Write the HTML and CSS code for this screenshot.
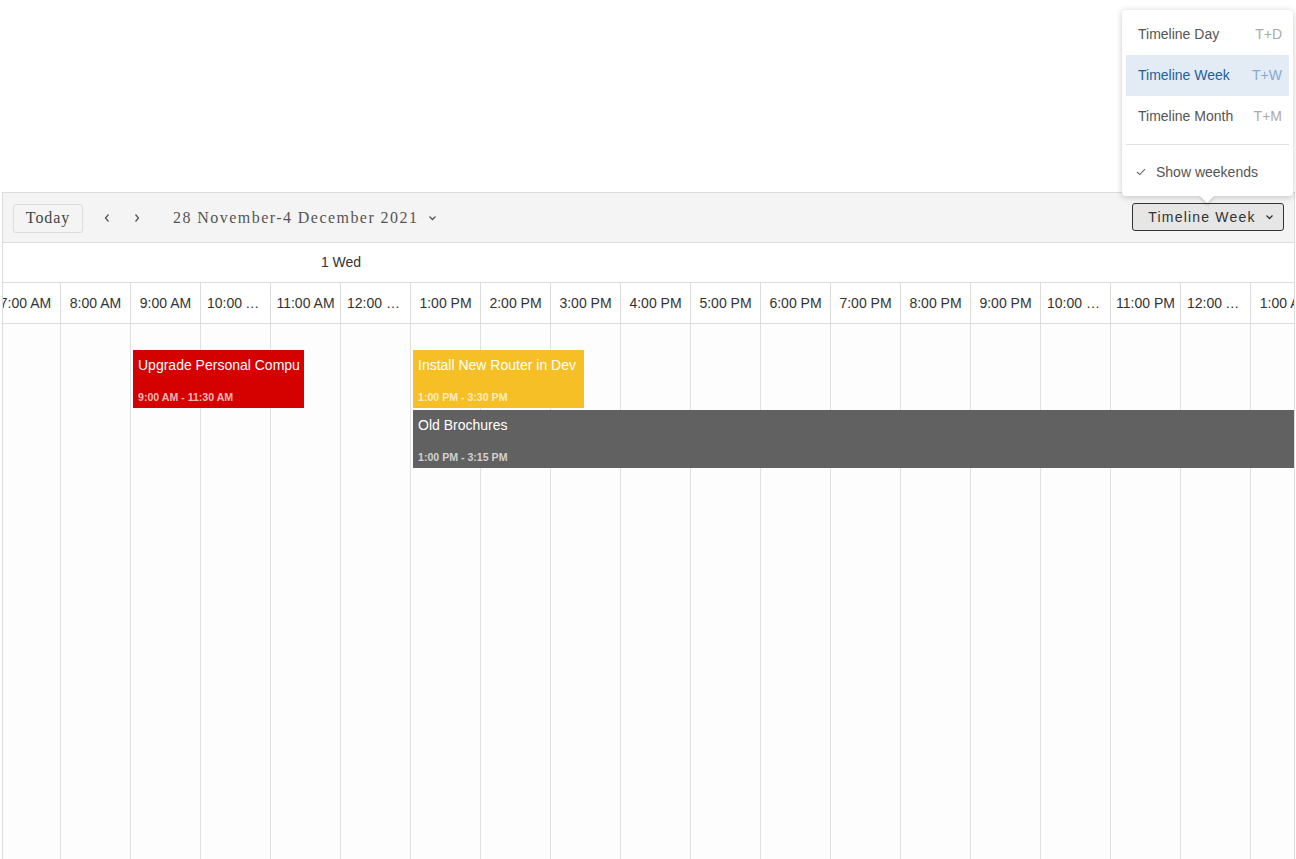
FILE: index.html
```html
<!DOCTYPE html>
<html>
<head>
<meta charset="utf-8">
<title>Scheduler</title>
<link rel="stylesheet" href="styles.css">
</head>
<body>
<div class="page">
  <div class="scheduler">
    <div class="toolbar">
      <button class="today-btn">Today</button>
      <div class="nav">
        <span class="nav-btn"><svg width="8" height="10" viewBox="0 0 8 10"><path d="M5.5 1.5 L2.5 5 L5.5 8.5" fill="none" stroke="#555" stroke-width="1.3"/></svg></span>
        <span class="nav-btn"><svg width="8" height="10" viewBox="0 0 8 10"><path d="M2.5 1.5 L5.5 5 L2.5 8.5" fill="none" stroke="#555" stroke-width="1.3"/></svg></span>
      </div>
      <div class="date-range">28 November-4 December 2021<svg class="caret" width="9" height="6" viewBox="0 0 9 6"><path d="M1.5 1.5 L4.5 4.5 L7.5 1.5" fill="none" stroke="#555" stroke-width="1.3"/></svg></div>
      <div class="grow"></div>
      <button class="view-btn">Timeline Week<svg class="caret" width="9" height="6" viewBox="0 0 9 6"><path d="M1.5 1.5 L4.5 4.5 L7.5 1.5" fill="none" stroke="#333" stroke-width="1.3"/></svg></button>
    </div>
    <div class="day-header">
      <div class="day-track">
        <div class="day-cell">1 Wed</div>
      </div>
    </div>
    <div class="time-header">
      <div class="track">
        <div class="time-cell">7:00 AM</div>
        <div class="time-cell">8:00 AM</div>
        <div class="time-cell">9:00 AM</div>
        <div class="time-cell clip">10:00 AM</div>
        <div class="time-cell">11:00 AM</div>
        <div class="time-cell clip">12:00 PM</div>
        <div class="time-cell">1:00 PM</div>
        <div class="time-cell">2:00 PM</div>
        <div class="time-cell">3:00 PM</div>
        <div class="time-cell">4:00 PM</div>
        <div class="time-cell">5:00 PM</div>
        <div class="time-cell">6:00 PM</div>
        <div class="time-cell">7:00 PM</div>
        <div class="time-cell">8:00 PM</div>
        <div class="time-cell">9:00 PM</div>
        <div class="time-cell clip">10:00 PM</div>
        <div class="time-cell">11:00 PM</div>
        <div class="time-cell clip">12:00 AM</div>
        <div class="time-cell">1:00 AM</div>
      </div>
    </div>
    <div class="grid-body">
      <div class="track body-track">
        <div class="slot"></div><div class="slot"></div><div class="slot"></div><div class="slot"></div>
        <div class="slot"></div><div class="slot"></div><div class="slot"></div><div class="slot"></div>
        <div class="slot"></div><div class="slot"></div><div class="slot"></div><div class="slot"></div>
        <div class="slot"></div><div class="slot"></div><div class="slot"></div><div class="slot"></div>
        <div class="slot"></div><div class="slot"></div><div class="slot"></div>
        <div class="event ev-red" style="left:142px;top:26px;width:171px;">
          <div class="ev-title">Upgrade Personal Computers</div>
          <div class="ev-time">9:00 AM - 11:30 AM</div>
        </div>
        <div class="event ev-yellow" style="left:422px;top:26px;width:171px;">
          <div class="ev-title">Install New Router in Dev Room</div>
          <div class="ev-time">1:00 PM - 3:30 PM</div>
        </div>
        <div class="event ev-gray" style="left:422px;top:86px;width:900px;">
          <div class="ev-title">Old Brochures</div>
          <div class="ev-time">1:00 PM - 3:15 PM</div>
        </div>
      </div>
    </div>
  </div>

  <div class="menu">
    <div class="menu-item"><span>Timeline Day</span><span class="shortcut">T+D</span></div>
    <div class="menu-item selected"><span>Timeline Week</span><span class="shortcut">T+W</span></div>
    <div class="menu-item"><span>Timeline Month</span><span class="shortcut">T+M</span></div>
    <div class="menu-sep"></div>
    <div class="menu-check"><svg width="10" height="8" viewBox="0 0 10 8"><path d="M1 4 L3.8 6.6 L9 1.2" fill="none" stroke="#666" stroke-width="1.1"/></svg><span>Show weekends</span></div>
  </div>
</div>
</body>
</html>
```

FILE: styles.css
```css
* { box-sizing: border-box; }
html, body {
  margin: 0;
  padding: 0;
  background: #ffffff;
  font-family: "Liberation Sans", Arial, sans-serif;
}
.page {
  position: relative;
  width: 1296px;
  height: 859px;
  overflow: hidden;
  padding-top: 192px;
  padding-left: 2px;
}
.scheduler {
  width: 1293px;
  height: 700px;
  border: 1px solid #dcdcdc;
  border-bottom: none;
  overflow: hidden;
  background: #fdfdfd;
}
.toolbar {
  height: 50px;
  display: flex;
  align-items: center;
  padding: 1px 10px 0 10px;
  background: #f4f4f4;
  border-bottom: 1px solid #dcdcdc;
}
.today-btn {
  width: 70px;
  height: 29px;
  border: 1px solid #dcdcdc;
  border-radius: 3px;
  background: #f4f4f4;
  font-family: "Liberation Serif", "Times New Roman", serif;
  font-size: 16px;
  letter-spacing: 0.9px;
  color: #444;
  padding: 0;
}
.nav {
  display: flex;
  gap: 14px;
  margin-left: 16px;
}
.nav-btn {
  width: 16px;
  height: 16px;
  display: flex;
  align-items: center;
  justify-content: center;
}
.date-range {
  margin-left: 28px;
  font-family: "Liberation Serif", "Times New Roman", serif;
  font-size: 16px;
  letter-spacing: 1.45px;
  color: #555;
  display: flex;
  align-items: center;
}
.date-range .caret { margin-left: 10px; }
.grow { flex: 1; }
.view-btn {
  width: 152px;
  height: 28px;
  margin-top: -2px;
  border: 1px solid #333;
  border-radius: 3px;
  background: #e6e6e6;
  font-family: "Liberation Sans", Arial, sans-serif;
  font-size: 14px;
  letter-spacing: 1.2px;
  color: #333;
  display: flex;
  align-items: center;
  justify-content: center;
  padding: 0 0 0 6px;
}
.view-btn .caret { margin-left: 9px; }

.day-header {
  height: 40px;
  border-bottom: 1px solid #dcdcdc;
  overflow: hidden;
  background: #fff;
}
.day-track {
  display: flex;
  margin-left: -502px;
}
.day-cell {
  flex: 0 0 1680px;
  height: 39px;
  line-height: 39px;
  text-align: center;
  font-size: 14px;
  color: #333;
}
.time-header {
  height: 41px;
  border-bottom: 1px solid #dcdcdc;
  overflow: hidden;
  background: #fff;
}
.track {
  display: flex;
  margin-left: -12px;
  width: 1330px;
}
.time-cell {
  flex: 0 0 70px;
  height: 40px;
  line-height: 40px;
  border-right: 1px solid #dcdcdc;
  text-align: center;
  font-size: 14px;
  color: #333;
  white-space: nowrap;
  overflow: hidden;
  text-overflow: ellipsis;
  padding: 0 2px;
}
.time-cell.clip {
  text-align: left;
  padding: 0 10px 0 6px;
}
.grid-body {
  height: 540px;
  overflow: hidden;
  background: #fdfdfd;
}
.body-track {
  position: relative;
  height: 540px;
}
.slot {
  flex: 0 0 70px;
  height: 540px;
  border-right: 1px solid #e0e0e0;
}
.event {
  position: absolute;
  height: 58px;
  padding: 6px 4px 5px 5px;
  display: flex;
  flex-direction: column;
  justify-content: space-between;
  overflow: hidden;
  color: #fff;
}
.ev-title {
  font-size: 14px;
  line-height: 18px;
  white-space: nowrap;
  overflow: hidden;
}
.ev-time {
  font-size: 10.6px;
  font-weight: bold;
  line-height: 12px;
  color: rgba(255,255,255,0.72);
  white-space: nowrap;
}
.ev-red { background: #d50000; }
.ev-yellow { background: #f6bf26; }
.ev-gray { background: #616161; }

.menu {
  position: absolute;
  left: 1122px;
  top: 10px;
  width: 171px;
  height: 186px;
  background: #fff;
  border-radius: 4px;
  box-shadow: 0 1px 6px rgba(0,0,0,0.22);
  padding: 4px;
  font-size: 14px;
  color: #555;
}
.menu::after {
  content: "";
  position: absolute;
  left: 80px;
  bottom: -5px;
  width: 10px;
  height: 10px;
  background: #fff;
  transform: rotate(45deg);
  box-shadow: 2px 2px 3px rgba(0,0,0,0.12);
}
.menu-item {
  height: 41px;
  display: flex;
  align-items: center;
  justify-content: space-between;
  padding: 0 7px 1px 12px;
}
.menu-item .shortcut { color: #aaa; }
.menu-item.selected {
  background: #e3ecf5;
  color: #1f5f9c;
}
.menu-item.selected .shortcut { color: #85aad0; }
.menu-sep {
  height: 1px;
  background: #e0e0e0;
  margin: 7px 0 0 0;
}
.menu-check {
  height: 54px;
  display: flex;
  align-items: center;
  padding-left: 10px;
  gap: 10px;
  position: relative;
  z-index: 1;
}
```
